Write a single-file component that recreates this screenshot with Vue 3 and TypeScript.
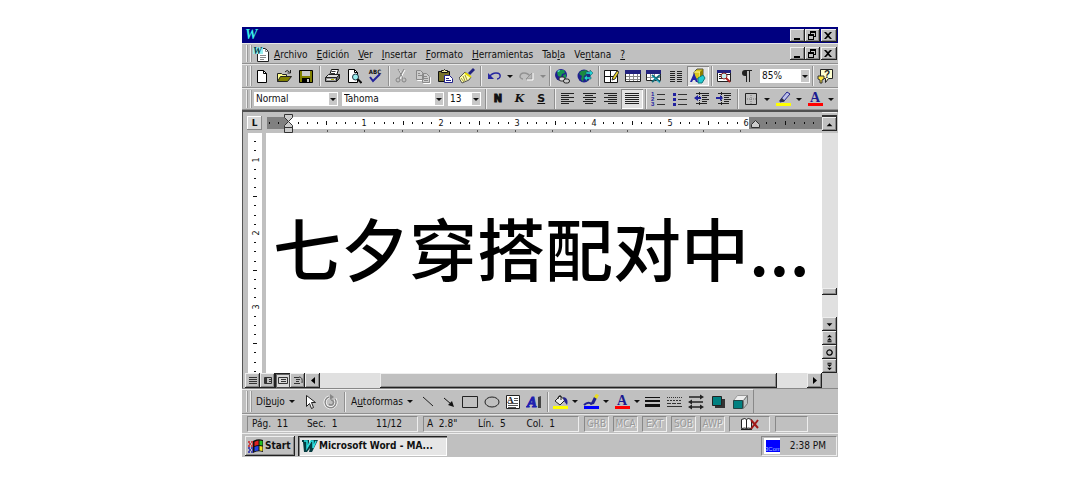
<script setup lang="ts">
type Kind = 'icon' | 'arrow' | 'combo' | 'letter' | 'menu'

interface Item {
  kind: Kind
  label: string
  icon?: string
  text?: string
  key?: number
  pressed?: boolean
  size?: string
}

interface Group {
  span: number
  items: Item[]
}

interface Bar {
  name: string
  groups: Group[]
}

const i = (icon: string, label: string, pressed = false): Item => ({ kind: 'icon', icon, label, pressed })
const arrow = (label: string): Item => ({ kind: 'arrow', label })
const combo = (text: string, label: string, size: string): Item => ({ kind: 'combo', text, label, size })
const letter = (text: string, label: string, size: string): Item => ({ kind: 'letter', text, label, size })
const menuItem = (text: string, key: number): Item => ({ kind: 'menu', text, key, label: text })

const menus = [
  { text: 'Archivo', key: 0 },
  { text: 'Edición', key: 0 },
  { text: 'Ver', key: 0 },
  { text: 'Insertar', key: 0 },
  { text: 'Formato', key: 0 },
  { text: 'Herramientas', key: 0 },
  { text: 'Tabla', key: 3 },
  { text: 'Ventana', key: 2 },
  { text: '?', key: 0 },
]

const topBars: Bar[] = [
  {
    name: 'standard',
    groups: [
      { span: 68, items: [i('new', 'Nuevo'), i('open', 'Abrir'), i('save', 'Guardar')] },
      { span: 69, items: [i('print', 'Imprimir'), i('preview', 'Vista preliminar'), i('spell', 'Ortografía')] },
      { span: 92, items: [i('cut', 'Cortar'), i('copy', 'Copiar'), i('paste', 'Pegar'), i('brush', 'Copiar formato')] },
      { span: 69, items: [i('undo', 'Deshacer'), arrow('Lista deshacer'), i('redo', 'Rehacer'), { ...arrow('Lista rehacer'), size: 'dim' }] },
      { span: 49, items: [i('link', 'Hipervínculo'), i('web', 'Barra Web')] },
      {
        span: 113,
        items: [i('borders', 'Tablas y bordes'), i('table', 'Insertar tabla'), i('excel', 'Insertar hoja'), i('columns', 'Columnas'), i('draw', 'Dibujo', true)],
      },
      { span: 101, items: [i('map', 'Mapa del documento'), i('pilcrow', 'Mostrar todo'), combo('85%', 'Zoom', 'zoom')] },
      { span: 26, items: [i('help', 'Ayudante')] },
    ],
  },
  {
    name: 'format',
    groups: [
      { span: 234, items: [combo('Normal', 'Estilo', 'style'), combo('Tahoma', 'Fuente', 'family'), combo('13', 'Tamaño', 'points')] },
      { span: 69, items: [letter('N', 'Negrita', 'bold'), letter('K', 'Cursiva', 'italic'), letter('S', 'Subrayado', 'under')] },
      { span: 91, items: [i('left', 'Izquierda'), i('center', 'Centrar'), i('right', 'Derecha'), i('justify', 'Justificar', true)] },
      { span: 92, items: [i('numbers', 'Numeración'), i('bullets', 'Viñetas'), i('outdent', 'Reducir sangría'), i('indent', 'Aumentar sangría')] },
      {
        span: 101,
        items: [i('frame', 'Bordes'), arrow('Tipos de borde'), i('highlight', 'Resaltar'), arrow('Color de resaltado'), i('fontcolor', 'Color de fuente'), arrow('Colores de fuente')],
      },
    ],
  },
]

const drawGroups: Group[] = [
  { span: 93, items: [menuItem('Dibujo', 2), i('pointer', 'Seleccionar objetos'), i('rotate', 'Girar libremente')] },
  {
    span: 203,
    items: [menuItem('Autoformas', 1), i('line', 'Línea'), i('lineArrow', 'Flecha'), i('rect', 'Rectángulo'), i('oval', 'Elipse'), i('textbox', 'Cuadro de texto'), i('wordart', 'WordArt')],
  },
  {
    span: 206,
    items: [
      i('fill', 'Color de relleno'), arrow('Colores de relleno'), i('linecolor', 'Color de línea'), arrow('Colores de línea'),
      i('fontcolor', 'Color de fuente'), arrow('Colores de fuente'), i('weight', 'Estilo de línea'), i('dash', 'Tipo de línea'),
      i('arrows', 'Estilo de flecha'), i('shadow', 'Sombra'), i('cube', '3D'),
    ],
  },
]

const lines = (rows: [number, number][], color = '#222') =>
  rows.map(([from, to], n) => `<path d="M${from} ${2.5 + n * 2}H${to}" stroke="${color}"/>`).join('')

const smallA = '<text x="8" y="11" text-anchor="middle" font-family="Liberation Serif, serif" font-weight="700" font-size="14" fill="#1a1a90">A</text>'

const icons: Record<string, string> = {
  new: '<path d="M3.5 2.5h6l3 3v9h-9z" fill="#fff" stroke="#000"/><path d="M9.5 2.5v3h3" stroke="#000"/>',
  open: '<path d="M1.5 13.5v-8h4l1 1h4v2" fill="#ffff90" stroke="#222"/><path d="M1.5 13.5l3-5h11l-4 5z" fill="#808000" stroke="#222"/><path d="M9 4q2-3 4.500 0M14.500 2v3h-3" stroke="#222"/>',
  save: '<path d="M1.500 2.500h13v12h-13z" fill="#808000" stroke="#000"/><path d="M4 3h8v5H4z" fill="#c8c8c8"/><path d="M4 10h8v4H4z" fill="#000"/><path d="M9 11h2v3H9z" fill="#c8c8c8"/>',
  print: '<path d="M5.500 7.500l2-6h7l-2 6z" fill="#fff" stroke="#111"/><path d="M7.500 3.500h4M7 5.500h4" stroke="#333"/><path d="M1.500 9.500l3-3h11l-3 3z" fill="#ddd" stroke="#222"/><path d="M1.500 9.500h11v4h-11z" fill="#999" stroke="#222"/><path d="M12.500 9.500l3-3v4l-3 3z" fill="#666" stroke="#222"/><path d="M3 11.500h8" stroke="#eee"/><path d="M7 11.500h3" stroke="#bb0"/>',
  preview: '<path d="M2.500 1.500h6l3 3v10h-9z" fill="#fff" stroke="#000"/><path d="M8.500 1.500v3h3" stroke="#000"/><circle cx="9.500" cy="9" r="3" fill="#9ee" stroke="#234"/><path d="M11.500 11l4 4" stroke="#111" stroke-width="2"/>',
  spell: '<text x="8" y="6" text-anchor="middle" font-family="DejaVu Sans Condensed, sans-serif" font-weight="700" font-size="6" fill="#111">ABC</text><path d="M3 9l3 4 7-7" stroke="#22229a" stroke-width="2"/>',
  cut: '<g stroke="#fff" transform="translate(1 1)"><path d="M5 1l5 9M11 1l-5 9"/></g><g stroke="#858585"><path d="M5 1l5 9M11 1l-5 9"/><circle cx="5" cy="12" r="2"/><circle cx="11" cy="12" r="2"/></g>',
  copy: '<path d="M2.500 3.500h4l3 3v6h-7zM8.500 6.500h4l3 3v6h-7z" stroke="#fff"/><path d="M1.500 2.500h4l3 3v6h-7zM7.500 5.500h4l3 3v6h-7z" fill="#ccc" stroke="#8a8a8a"/><path d="M3 5.500h2M3 7.500h4M9 8.500h3M9 10.500h4M9 12.500h4" stroke="#8a8a8a"/>',
  paste: '<path d="M1.500 3.500h11v10h-11z" fill="#77722a" stroke="#111"/><path d="M4.500 4.500v-2h2q1-2 2 0h2v2z" fill="#eee8a0" stroke="#111"/><path d="M7.500 7.500h5l3 3v4h-8z" fill="#fff" stroke="#22228c"/><path d="M9 10.500h3M9 12.500h5" stroke="#22228c"/>',
  brush: '<path d="M9 5l5-5 2 2-5 5z" fill="#22227f"/><path d="M6 4l6 5-2 3-7 3-3-5z" fill="#ffffb0" stroke="#555"/><path d="M6 7l2 5M4 8l2 5M2 10l3 4" stroke="#99903a"/><path d="M6 5l6 4" stroke="#e6dc00" stroke-width="2"/>',
  undo: '<path d="M3 9q3-4 7-4 5 0 4 4-1 2-3 2" stroke="#2525a0" stroke-width="1.500"/><path d="M2 5v6h6z" fill="#2525a0"/>',
  redo: '<path d="M13 9q-3-4-7-4-4 0-4 4 1 2 3 2" stroke="#929292" stroke-width="1.500"/><path d="M14 5v6H8z" fill="#b6b6b6" stroke="#929292"/><path d="M15 5v7H9" stroke="#fff"/>',
  link: '<circle cx="7" cy="7" r="6" fill="#202090"/><path d="M5 2l5 0 1 3-3 1-1 3-3-1-1-4zM9 7l3-1v4l-2 1z" fill="#169650"/><path d="M3 3l3-1-1 2z" fill="#6ee"/><rect x="5" y="9" width="6" height="4" rx="2" fill="#ddd" stroke="#333"/><rect x="9.500" y="11" width="6" height="4" rx="2" fill="#ccc" stroke="#222"/>',
  web: '<circle cx="7" cy="8" r="6.500" fill="#202090"/><path d="M4 3l6-1 1 3-4 3-1 6-2-3 1-3-3-2z" fill="#1a8a40"/><path d="M9 4h4V2l3 3-3 3V6H9zM14 11h-4v2l-3-3 3-3v2h4z" fill="#22d2d8" stroke="#155" stroke-width=".5"/>',
  borders: '<path d="M1.500 2.500h13v12h-13z" fill="#fff" stroke="#111"/><path d="M7.500 2.500v12M1.500 8.500h13" stroke="#111"/><path d="M9 12l1-3 4-6 2 1-4 7z" fill="#eed52a" stroke="#333"/>',
  table: '<path d="M.500 3.500h15v10H.500z" fill="#fff" stroke="#222"/><path d="M0 2h16v4H0z" fill="#22227f"/><path d="M4.500 6v7M8.500 6v7M12.500 6v7M1 8.500h14M1 11.500h14" stroke="#888"/>',
  excel: '<path d="M.500 3.500h14v9H.500z" fill="#fff" stroke="#222"/><path d="M0 2h15v4H0z" fill="#22227f"/><path d="M4.500 6v6M8.500 6v6M1 9.500h13" stroke="#888"/><path d="M6 7l8 7M14 7l-8 7" stroke="#156c78" stroke-width="2"/><path d="M6 8l8 7" stroke="#2bd"/>',
  columns: '<path d="M2 3.500h5M2 5.500h5M2 7.500h5M2 9.500h5M2 11.500h5M2 13.500h5M9 3.500h5M9 5.500h5M9 7.500h5M9 9.500h5M9 11.500h5M9 13.500h5" stroke="#222"/>',
  draw: '<path d="M4 4l3-3h6v7l-3 3H4z" fill="#d9c51c" stroke="#554"/><path d="M4 4h6v7" stroke="#fff79a"/><path d="M10 4l3-3v7l-3 3z" fill="#8c7c00"/><path d="M8 10l5-3 2 3-3 5H8z" fill="#23cbd2" stroke="#177"/><path d="M0 14L4 5l4 9H6l-1-2H3l-1 2z" fill="#2424a8"/>',
  map: '<path d="M1.500 2.500h13v11h-13z" fill="#fff" stroke="#222"/><path d="M1 2h14v3H1z" fill="#22227f"/><path d="M3 6.500h3M3 8.500h2M3 10.500h3M11 6.500h3" stroke="#222"/><circle cx="8" cy="8" r="3" fill="#c5efef" stroke="#822"/><path d="M10 10l4 4" stroke="#b02222" stroke-width="2"/>',
  pilcrow: '<path d="M7 2.500h7M8.500 2v12M11.500 2v12" stroke="#222"/><path d="M8 2h-1a3 3 0 0 0 0 6h1z" fill="#222"/>',
  help: '<path d="M3.500 1.500h12v9h-4l-3 4v-4h-5z" fill="#ffffd0" stroke="#222"/><text x="10" y="9.500" text-anchor="middle" font-size="10" font-weight="700" font-family="Liberation Sans, sans-serif" fill="#222">?</text><path d="M1 8h6v3l-2 1v3H3v-3l-2-1z" fill="#ffe43a" stroke="#333"/>',
  left: lines([[2, 15], [2, 10], [2, 15], [2, 10], [2, 15], [2, 10]]),
  center: lines([[2, 15], [4, 12], [2, 15], [4, 12], [2, 15], [4, 12]]),
  right: lines([[2, 15], [6, 15], [2, 15], [6, 15], [2, 15], [6, 15]]),
  justify: lines([[1, 15], [1, 15], [1, 15], [1, 15], [1, 15], [1, 15]]),
  numbers: '<path d="M7 3.500h8M7 8.500h8M7 13.500h8" stroke="#333"/><g font-family="Liberation Sans, sans-serif" font-size="6" font-weight="700" fill="#2222a0"><text x="1" y="5">1</text><text x="1" y="10">2</text><text x="1" y="15">3</text></g>',
  bullets: '<path d="M6 3.500h9M6 8.500h9M6 13.500h9" stroke="#333"/><path d="M1 2h3v3H1zM1 7h3v3H1zM1 12h3v3H1z" fill="#2222a0"/>',
  outdent: '<path d="M2 2.500h13M8 4.500h7M8 6.500h5M8 8.500h7M8 10.500h5M2 12.500h11" stroke="#222"/><path d="M5.500 1v14" stroke="#222" stroke-dasharray="1 1"/><path d="M0 7l4-3v2h3v2H4v2z" fill="#2222a0"/>',
  indent: '<path d="M2 2.500h13M8 4.500h7M8 6.500h5M8 8.500h7M8 10.500h5M2 12.500h11" stroke="#222"/><path d="M5.500 1v14" stroke="#222" stroke-dasharray="1 1"/><path d="M7 7L4 4v2H0v2h4v2z" fill="#2222a0"/>',
  frame: '<path d="M2.500 2.500h11v11h-11z" stroke="#222"/><path d="M8 4v9M4 8h9" stroke="#777" stroke-dasharray="1 1"/>',
  highlight: '<path d="M1 12h15v3H1z" fill="#ff0"/><path d="M6 8l6-7 3 2-6 7-4 1z" fill="#bcc0e8" stroke="#22228c"/><path d="M4 10l3-3 3 3-2 1z" fill="#334"/>',
  fontcolor: '<path d="M1 12h15v3H1z" fill="#f00"/>' + smallA,
  pointer: '<path d="M4.500 1.500v11l3-3 2 5 2-1-2-5h4z" fill="#fff" stroke="#222"/>',
  rotate: '<path d="M12 5a5.500 5.500 0 1 1-6-2" stroke="#fff" stroke-width="3"/><path d="M12 5a5.500 5.500 0 1 1-6-2" stroke="#888" stroke-width="1.500"/><path d="M7 0l4 3-4 3z" fill="#888"/><path d="M8 6a2.500 2.500 0 1 1-2 4" stroke="#888" stroke-width="1.500"/>',
  line: '<path d="M3 3l10 9" stroke="#222"/>',
  lineArrow: '<path d="M3 4l7 6" stroke="#111"/><path d="M13 13l-2-6-4 4z" fill="#111"/>',
  rect: '<path d="M.500 2.500h15v11H.500z" stroke="#222"/>',
  oval: '<ellipse cx="8" cy="8" rx="7" ry="5" stroke="#222"/>',
  textbox: '<path d="M1.500 1.500h13v13h-13z" fill="#fff" stroke="#222"/><text x="2" y="9" font-family="Liberation Serif, serif" font-size="9" font-weight="700" fill="#222">A</text><path d="M9 4.500h4M9 6.500h4M3 9.500h10M3 11.500h10M3 13.500h8" stroke="#555"/>',
  wordart: '<path d="M12 3l3-1v12h-3z" fill="#444"/><text x="1" y="13" font-family="Liberation Serif, serif" font-size="15" font-style="italic" font-weight="700" fill="#2020b0" stroke="#2020b0">A</text>',
  fill: '<path d="M1 12h15v3H1z" fill="#ff0"/><path d="M3 7l5-5 5 4-5 5z" fill="#eee" stroke="#222"/><path d="M6 5q0-4 3-3v4" stroke="#222"/><path d="M11 3q6 1 4 8l-3-4z" fill="#22228c"/>',
  linecolor: '<path d="M1 12h15v3H1z" fill="#00f"/><path d="M1 11q4-4 8-1" stroke="#22228c" stroke-width="2"/><path d="M8 9l3-6 3 1-3 6-4 1z" fill="#22228c"/><path d="M11 3l2-3 3 1-2 4z" fill="#e8dc20"/>',
  weight: '<path d="M0 3.500h15" stroke="#111"/><path d="M0 7h15" stroke="#111" stroke-width="2"/><path d="M0 11.500h15" stroke="#111" stroke-width="3"/>',
  dash: '<path d="M1 3.500h15" stroke="#333" stroke-dasharray="1 1"/><path d="M1 6.500h15" stroke="#333" stroke-dasharray="2 1"/><path d="M1 9.500h15" stroke="#333" stroke-dasharray="4 1"/><path d="M1 12.500h15" stroke="#333"/>',
  arrows: '<path d="M1 3h12M3 8h12M2 13h12" stroke="#222" stroke-width="1.500"/><path d="M12 .500l4 2.500-4 2.500zM4 5.500L0 8l4 2.500zM12 10.500l4 2.500-4 2.500zM4 10.500L0 13l4 2.500z" fill="#222"/>',
  shadow: '<path d="M5 5h10v9H5z" fill="#333"/><path d="M2.500 2.500h9v9h-9z" fill="#008080" stroke="#222"/>',
  cube: '<path d="M1.500 6.500l4-5h10l-4 5z" fill="#eee" stroke="#999"/><path d="M11.500 6.500l4-5v8l-4 5z" fill="#bcc4c4" stroke="#777"/><path d="M1.500 6.500h9v8h-9z" fill="#008080" stroke="#244"/>',
}

const windowButtons = [
  { label: 'Minimizar', d: 'M3 8h6v2H3z' },
  { label: 'Restaurar', d: 'M4 1h6v6H8v3H2V4h2zM5 3v1h3v2h1V3zM3 6v3h4V6z' },
  { label: 'Cerrar', d: 'M2 2h2l2 2 2-2h2L7 5.500 10 9H8L6 7 4 9H2l3-3.500z' },
]

const viewButtons = [
  { label: 'Normal', d: 'M2 2.500h8M2 4.500h8M2 6.500h8M2 8.500h8', on: false },
  { label: 'Diseño en pantalla', d: 'M2.500 2.500h7v6h-7zM4.500 2v7M3.500 2v7M7 4.500h2M7 6.500h2', on: false },
  { label: 'Diseño de página', d: 'M1.500 2.500h9v6h-9zM4 4.500h5M4 6.500h5', on: true },
  { label: 'Esquema', d: 'M2 2.500h5M4 4.500h4M4 6.500h3M2 8.500h6M7 2q4 0 3 6', on: false },
]

const browseButtons = [
  { label: 'Bajar', d: 'M3 4h7L6.500 7.500z' },
  { label: 'Página anterior', d: 'M6.500 1L9.500 4h-6zM6.500 5L9.500 8h-6zM4 9h5v1H4z' },
  { label: 'Seleccionar objeto de búsqueda', d: 'M6.500 1.500a4 4 0 1 0 .1 0zM6.500 3a2.500 2.500 0 1 1-.1 0z' },
  { label: 'Página siguiente', d: 'M3.500 3h6l-3 3zM3.500 7h6l-3 3zM4 1h5v1H4z' },
]

interface Mark {
  at: number
  kind: 'dot' | 'tick' | 'number'
  text: string
}

function marks(zero: number, inch: number, from: number, to: number): Mark[] {
  const list: Mark[] = []
  for (let n = from; n <= to; n++) {
    if (n === 0) continue
    const kind = n % 8 === 0 ? 'number' : n % 4 === 0 ? 'tick' : 'dot'
    list.push({ at: Math.round(zero + (n * inch) / 8), kind, text: String(n / 8) })
  }
  return list
}

const across = marks(21, 76.4, -2, 55)
const down = marks(-47, 73.5, 6, 31)
const tabs = Array.from({ length: 12 }, (_, n) => Math.round(59.5 + n * 37.6))
const modes = ['GRB', 'MCA', 'EXT', 'SOB', 'AWP']
</script>

<template>
  <div class="desktop">
    <div class="window">
      <header class="title-bar">
        <span class="logo">W</span>
        <span class="controls">
          <button v-for="b in windowButtons" :key="b.label" :aria-label="b.label" class="raised control">
            <svg viewBox="0 0 12 11"><path :d="b.d" fill="#000" fill-rule="evenodd" /></svg>
          </button>
        </span>
      </header>

      <nav class="menu-bar">
        <span class="grip"></span>
        <svg class="doc-icon" viewBox="0 0 16 16" aria-hidden="true">
          <path d="M4.500 2.500h8l3 3v10h-11z" fill="#fff" stroke="#222" />
          <path d="M12.500 2.500v3h3M7 9.500h6M7 11.500h6M7 13.500h4" fill="none" stroke="#888" />
          <path d="M0 1h10v7H0z" fill="#9ee" />
          <text x="0" y="8" font-family="Liberation Serif, serif" font-style="italic" font-weight="700" font-size="10" fill="#063c48">W</text>
        </svg>
        <button v-for="m in menus" :key="m.text" class="menu">
          {{ m.text.slice(0, m.key) }}<u>{{ m.text[m.key] }}</u>{{ m.text.slice(m.key + 1) }}
        </button>
        <span class="controls">
          <button v-for="b in windowButtons" :key="b.label" :aria-label="b.label + ' documento'" class="raised control">
            <svg viewBox="0 0 12 11"><path :d="b.d" fill="#000" fill-rule="evenodd" /></svg>
          </button>
        </span>
      </nav>

      <div v-for="bar in topBars" :key="bar.name" class="bar" :class="bar.name">
        <span class="grip"></span>
        <div v-for="(g, gi) in bar.groups" :key="gi" class="group" :style="{ flex: `${g.span} 1 ${g.span}px` }">
          <template v-for="item in g.items" :key="item.label">
            <label v-if="item.kind === 'combo'" class="combo" :class="item.size">
              <select :aria-label="item.label">
                <option>{{ item.text }}</option>
              </select>
              <span class="drop"></span>
            </label>
            <button v-else-if="item.kind === 'arrow'" class="arrow" :class="item.size" :aria-label="item.label"></button>
            <button v-else-if="item.kind === 'letter'" class="tool letter" :class="item.size" :aria-label="item.label">{{ item.text }}</button>
            <button v-else class="tool" :class="{ pressed: item.pressed }" :aria-label="item.label">
              <svg class="icon" viewBox="0 0 16 16" v-html="icons[item.icon!]"></svg>
            </button>
          </template>
        </div>
      </div>

      <main class="workspace">
        <div class="corner"><span class="tab-stop">L</span></div>
        <div class="ruler">
          <svg class="ruler-scale" aria-hidden="true">
            <rect x="0" y="5" width="100%" height="12" fill="#808080" />
            <rect x="21" y="5" width="461" height="12" fill="#fff" />
            <template v-for="m in across" :key="m.at">
              <text v-if="m.kind === 'number'" :x="m.at" y="14" class="ruler-number">{{ m.text }}</text>
              <rect v-else :x="m.at" :y="m.kind === 'tick' ? 9 : 10" width="1" :height="m.kind === 'tick' ? 4 : 2" fill="#111" />
            </template>
            <rect v-for="t in tabs" :key="t" :x="t" y="18" width="1" height="2" fill="#555" />
            <path d="M17.500 2.500h8v3l-4 4-4-4zM17.500 15.500v-2l4-4 4 4v2zM17.500 15.500h8v5h-8z" fill="#ccc" stroke="#333" />
            <path d="M484.500 15.500v-3l4-4 4 4v3z" fill="#ccc" stroke="#333" />
          </svg>
        </div>
        <div class="scroll-top">
          <span class="split"></span>
          <button class="raised square" aria-label="Subir"><svg viewBox="0 0 13 11"><path d="M3 7.500h7L6.500 4z" /></svg></button>
        </div>

        <div class="side-ruler">
          <svg class="side-scale" aria-hidden="true">
            <template v-for="m in down" :key="m.at">
              <text v-if="m.kind === 'number'" x="8" :y="m.at + 3" class="ruler-number" :transform="`rotate(-90 8 ${m.at})`">{{ m.text }}</text>
              <rect v-else :x="m.kind === 'tick' ? 5 : 6" :y="m.at" :width="m.kind === 'tick' ? 4 : 2" height="1" fill="#111" />
            </template>
          </svg>
        </div>
        <article class="page"><p>七夕穿搭配对中...</p></article>
        <div class="v-scroll">
          <span class="v-thumb raised"></span>
          <button v-for="b in browseButtons" :key="b.label" class="raised square" :aria-label="b.label">
            <svg viewBox="0 0 13 11"><path :d="b.d" fill-rule="evenodd" /></svg>
          </button>
        </div>
      </main>

      <div class="h-scroll">
        <button v-for="v in viewButtons" :key="v.label" class="raised view" :class="{ on: v.on }" :aria-label="v.label">
          <svg viewBox="0 0 12 11"><path :d="v.d" fill="none" stroke="#333" /></svg>
        </button>
        <button class="raised view" aria-label="Izquierda"><svg viewBox="0 0 12 11"><path d="M8 2v7L4 5.500z" /></svg></button>
        <span class="h-track"><span class="h-thumb raised"></span></span>
        <button class="raised view" aria-label="Derecha"><svg viewBox="0 0 12 11"><path d="M4 2v7l4-3.500z" /></svg></button>
      </div>

      <div class="bar drawing">
        <div class="drawing-inner">
          <span class="grip"></span>
          <div v-for="(g, gi) in drawGroups" :key="gi" class="group" :style="{ flex: `${g.span} 1 ${g.span}px` }">
            <template v-for="item in g.items" :key="item.label">
              <button v-if="item.kind === 'menu'" class="draw-menu">
                <span>{{ item.text!.slice(0, item.key) }}<u>{{ item.text![item.key!] }}</u>{{ item.text!.slice(item.key! + 1) }}</span>
                <span class="triangle"></span>
              </button>
              <button v-else-if="item.kind === 'arrow'" class="arrow" :aria-label="item.label"></button>
              <button v-else class="tool" :aria-label="item.label">
                <svg class="icon" viewBox="0 0 16 16" v-html="icons[item.icon!]"></svg>
              </button>
            </template>
          </div>
        </div>
      </div>

      <footer class="status">
        <div class="panel place"><span>Pág.&nbsp; 11</span><span>Sec.&nbsp; 1</span><span>11/12</span></div>
        <div class="panel caret"><span>A&nbsp; 2.8"</span><span>Lín.&nbsp; 5</span><span>Col.&nbsp; 1</span></div>
        <div v-for="m in modes" :key="m" class="panel mode">{{ m }}</div>
        <div class="panel book">
          <svg viewBox="0 0 20 14" aria-hidden="true">
            <path d="M1.500 2.500q4-2 5 0 1-2 5 0v9q-4-1-5 0-1-1-5 0z" fill="#fff" stroke="#222" />
            <path d="M6.500 2.500v9M1 12.500h11" stroke="#222" />
            <path d="M11 3l7 8M18 3l-7 9" stroke="#a01818" stroke-width="2" />
          </svg>
        </div>
        <div class="panel blank"></div>
      </footer>

      <footer class="taskbar">
        <button class="raised start">
          <svg viewBox="0 0 18 16" aria-hidden="true">
            <path d="M6 3q5-3 10-1v12q-5-2-10 1z" fill="#111" />
            <path d="M7.500 4q2-1.500 4-1.500V7q-2 0-4 1z" fill="#e02222" />
            <path d="M12.500 2.500l3 .5v4.500l-3-.5z" fill="#22c022" />
            <path d="M7.500 9q2-1 4-1v4.500q-2 0-4 1z" fill="#2244e8" />
            <path d="M12.500 8l3 .5v4.500l-3-.5z" fill="#f0e020" />
            <path d="M1 4h5M2 6h4M1 8h5" stroke="#c22" stroke-width="1.500" stroke-dasharray="2 1" />
            <path d="M1 10h5M2 12h4M1 14h5" stroke="#22a" stroke-width="1.500" stroke-dasharray="2 1" />
          </svg>
          Start
        </button>
        <button class="task">
          <svg class="task-logo" viewBox="0 0 16 14" aria-hidden="true">
            <path d="M0 1h7v2l-1 5 3-5V1h7l-6 12H7l1-4-3 4H2L1 3H0z" fill="#053c40" />
            <path d="M2 2h3v7l4-7h2v7l3-7" fill="none" stroke="#2ce0e0" stroke-width="1.500" />
          </svg>
          Microsoft Word - MA...
        </button>
        <div class="tray">
          <svg viewBox="0 0 16 16" aria-hidden="true">
            <path d="M0 0h16v16H0z" fill="#fff" />
            <path d="M2 2h14v12H2z" fill="#00f" />
            <text x="1" y="13" font-family="Liberation Sans, sans-serif" font-size="6" fill="#a8c0ff">3Com</text>
          </svg>
          <time>2:38 PM</time>
        </div>
      </footer>
    </div>
  </div>
</template>

<style>
body {
  margin: 0;
  background: #fff;
}
</style>

<style scoped>
.desktop {
  display: flex;
  justify-content: center;
  padding: 27px 0 32px;
  font-family: 'DejaVu Sans Condensed', 'DejaVu Sans', 'Noto Sans', sans-serif;
  font-size: 10px;
  line-height: 14px;
  color: #111;
}
.window {
  width: 55%;
  min-width: 596px;
  background: #c0c0c0;
}
* {
  box-sizing: border-box;
}
button,
select {
  margin: 0;
  padding: 0;
  border: 0;
  border-radius: 0;
  background: none;
  color: inherit;
  font: inherit;
}
svg {
  display: block;
  fill: none;
}
.raised {
  background: #c0c0c0;
  box-shadow: inset -1px -1px #222, inset 1px 1px #eee, inset -2px -2px #888;
}
.raised svg path:not([fill]) {
  fill: #000;
}
.title-bar {
  display: flex;
  align-items: center;
  justify-content: space-between;
  height: 16px;
  padding: 0 0 0 3px;
  background: #000080;
}
.logo {
  color: #3cf0e8;
  font: italic 700 14px/16px 'Liberation Serif', serif;
}
.controls {
  display: flex;
  margin-left: auto;
  padding-right: 1px;
}
.control {
  width: 15px;
  height: 13px;
  padding: 1px;
}
.control:last-child {
  width: 16px;
  margin-left: 1px;
}
.control svg {
  width: 12px;
  height: 11px;
}
.menu-bar,
.bar {
  display: flex;
  align-items: center;
  border-top: 1px solid #e8e8e8;
  border-bottom: 1px solid #909090;
  padding-left: 4px;
}
.menu-bar {
  height: 21px;
}
.grip {
  flex: none;
  align-self: stretch;
  width: 5px;
  margin: 1px 0;
  border: solid #eee;
  border-width: 0 1px;
  box-shadow: inset 1px 0 #999, 1px 0 #999;
}
.doc-icon {
  width: 16px;
  height: 16px;
  margin-left: 2px;
}
.menu {
  padding: 2px 4px 0 5px;
  white-space: nowrap;
}
.bar {
  height: 24px;
}
.bar.format {
  height: 22px;
}
.group {
  display: flex;
  align-items: center;
  min-width: 0;
  height: 20px;
  padding: 0 2px 0 1px;
  border-left: 1px solid #909090;
  box-shadow: inset 1px 0 #eee;
}
.grip + .group {
  padding-left: 0;
  border-left: 0;
  box-shadow: none;
}
.tool {
  display: flex;
  flex: 1 1 0;
  align-items: center;
  justify-content: center;
  min-width: 0;
  height: 20px;
}
.combo + .combo {
  margin-left: 4px;
}
.icon {
  flex: none;
  width: 16px;
  height: 16px;
}
.pressed {
  background: #e2e2e2;
  box-shadow: inset 1px 1px #888, inset -1px -1px #fff;
}
.arrow {
  display: flex;
  flex: none;
  align-items: center;
  justify-content: center;
  width: 9px;
  height: 20px;
}
.arrow::before,
.drop::before,
.triangle {
  content: '';
  width: 0;
  border: solid transparent;
  border-width: 3px 3px 0;
  border-top-color: #111;
}
.arrow.dim::before {
  border-top-color: #888;
}
.combo {
  display: grid;
  flex: none;
  height: 14px;
  background: #fff;
}
.combo select {
  grid-area: 1 / 1;
  width: 100%;
  padding-left: 2px;
  appearance: none;
}
.drop {
  display: flex;
  grid-area: 1 / 1;
  align-items: center;
  justify-content: center;
  justify-self: end;
  width: 8px;
  margin: 1px;
  background: #c8c8c8;
  pointer-events: none;
}
.zoom {
  width: 50px;
  margin-left: 3px;
}
.style {
  flex: 0 1 84px;
  margin-left: 3px;
}
.family {
  flex: 1 1 100px;
}
.points {
  flex: 0 1 33px;
  margin-right: 2px;
}
.letter {
  font: 700 12px/14px 'DejaVu Serif', serif;
}
.letter.bold {
  font: 900 10px/14px 'DejaVu Sans', sans-serif;
  -webkit-text-stroke: 1px #111;
}
.letter.italic {
  font-style: italic;
  font-size: 11px;
}
.letter.under {
  font: 700 11px/14px 'DejaVu Sans', sans-serif;
  text-decoration: underline;
}
.workspace {
  display: grid;
  grid-template-columns: 24px 1fr 16px;
  grid-template-rows: 21px 240px;
  border-top: 2px solid #505050;
}
.corner {
  display: flex;
  align-items: center;
  justify-content: center;
  border-left: 1px solid #555;
}
.tab-stop {
  width: 15px;
  height: 14px;
  background: #d8d8d8;
  box-shadow: inset -1px -1px #888, inset 1px 1px #fff;
  font: 900 9px/14px 'DejaVu Sans', sans-serif;
  text-align: center;
}
.ruler {
  min-width: 0;
  padding-left: 1px;
}
.ruler-scale {
  width: 100%;
  height: 21px;
}
.ruler-number {
  fill: #111;
  font-size: 9px;
  text-anchor: middle;
}
.scroll-top {
  padding-right: 1px;
}
.split {
  display: block;
  height: 5px;
  border-top: 1px solid #eee;
  border-bottom: 2px solid #333;
}
.square {
  display: flex;
  align-items: center;
  justify-content: center;
  width: 15px;
  height: 14px;
}
.square svg {
  width: 11px;
  height: 9px;
}
.side-ruler {
  padding-left: 5px;
  border-left: 1px solid #555;
}
.side-scale {
  width: 14px;
  height: 240px;
  background: #fff;
}
.page {
  display: flex;
  align-items: center;
  min-width: 0;
  overflow: hidden;
  background: #fff;
}
.page p {
  margin: 0 0 12px 7px;
  color: #000;
  font: 500 68px/100px 'Noto Sans CJK SC', sans-serif;
  white-space: nowrap;
}
.v-scroll {
  display: flex;
  flex-direction: column;
  justify-content: flex-end;
  padding-right: 1px;
  background: #e0e0e0;
}
.v-thumb {
  height: 7px;
  margin-bottom: 22px;
}
.h-scroll {
  display: flex;
  height: 15px;
  padding: 0 16px 0 2px;
  border-left: 1px solid #555;
}
.view {
  display: flex;
  flex: none;
  align-items: center;
  justify-content: center;
  width: 15px;
  height: 15px;
}
.view svg {
  width: 12px;
  height: 11px;
}
.view.on {
  background: #d8d8d8;
  box-shadow: inset 1px 1px #222, inset 2px 2px #666, inset -1px -1px #444;
}
.h-track {
  display: flex;
  flex: 1;
  padding: 0 30px 0 60px;
  background: #e0e0e0;
}
.h-thumb {
  flex: 1;
}
.bar.drawing {
  height: 26px;
  padding: 0;
  border-top-color: #888;
}
.drawing-inner {
  display: flex;
  flex: 0 1 512px;
  align-items: center;
  height: 24px;
  padding-left: 4px;
  border-top: 1px solid #eee;
  border-right: 1px solid #888;
}
.draw-menu {
  display: flex;
  flex: none;
  align-items: center;
  gap: 4px;
  padding: 0 4px 0 5px;
  white-space: nowrap;
}
.status {
  display: flex;
  align-items: center;
  height: 19px;
  padding-left: 5px;
  border-top: 1px solid #e8e8e8;
}
.panel {
  display: flex;
  flex: none;
  align-items: center;
  height: 16px;
  margin-right: 5px;
  border: 1px solid;
  border-color: #888 #eee #eee #888;
  white-space: nowrap;
}
.place {
  justify-content: space-between;
  width: 171px;
  padding: 0 15px 0 4px;
}
.place span:nth-child(2) {
  margin-right: 20px;
}
.caret {
  justify-content: space-between;
  width: 156px;
  padding: 0 23px 0 3px;
}
.mode {
  justify-content: center;
  width: 25px;
  margin-right: 4px;
  color: #999;
  text-shadow: 1px 1px #eee;
}
.book {
  justify-content: center;
  width: 41px;
}
.book svg {
  width: 20px;
  height: 14px;
}
.blank {
  width: 33px;
}
.taskbar {
  display: flex;
  align-items: center;
  height: 24px;
  padding: 0 1px 0 3px;
  border-top: 1px solid #eee;
  font-weight: 700;
}
.start,
.task {
  display: flex;
  align-items: center;
  height: 20px;
  white-space: nowrap;
}
.start {
  width: 50px;
  padding-left: 2px;
}
.start svg {
  width: 18px;
  height: 16px;
}
.task {
  width: 149px;
  margin-left: 3px;
  padding-left: 4px;
  gap: 1px;
  background: #e6e6e6;
  box-shadow: inset 1px 1px #222, inset 2px 2px #888, inset -1px -1px #fff;
}
.task-logo {
  width: 16px;
  height: 14px;
}
.tray {
  display: flex;
  align-items: center;
  justify-content: space-between;
  width: 76px;
  height: 20px;
  margin-left: auto;
  padding: 0 10px 0 2px;
  border: 1px solid;
  border-color: #888 #eee #eee #888;
  font-weight: 400;
}
.tray svg {
  width: 16px;
  height: 16px;
}
</style>
